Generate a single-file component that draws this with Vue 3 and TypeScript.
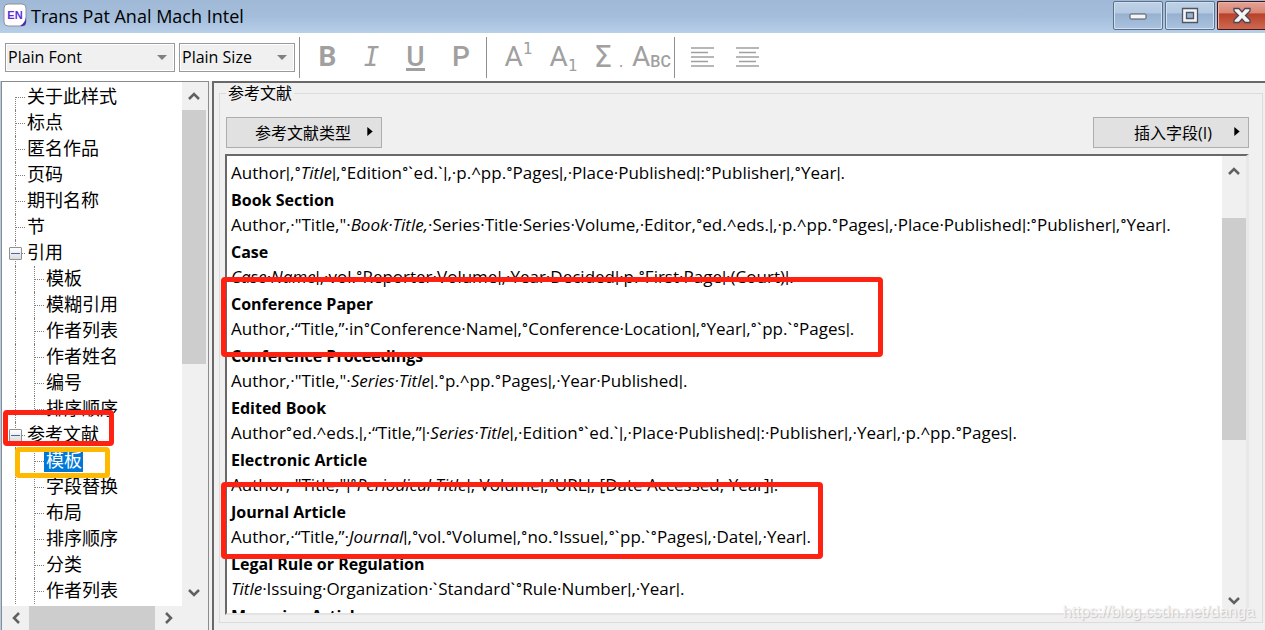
<script setup lang="ts">
import { ref } from 'vue'

interface TreeRow {
  label: string
  child?: boolean
  group?: boolean
  first?: boolean
  lastChild?: boolean
}

interface Run {
  text: string
  italic: boolean
  code: boolean
}

interface Line {
  heading?: string
  runs?: Run[]
}

const rows: TreeRow[] = [
  { label: '关于此样式', first: true },
  { label: '标点' },
  { label: '匿名作品' },
  { label: '页码' },
  { label: '期刊名称' },
  { label: '节' },
  { label: '引用', group: true },
  { label: '模板', child: true },
  { label: '模糊引用', child: true },
  { label: '作者列表', child: true },
  { label: '作者姓名', child: true },
  { label: '编号', child: true },
  { label: '排序顺序', child: true, lastChild: true },
  { label: '参考文献', group: true },
  { label: '模板', child: true },
  { label: '字段替换', child: true },
  { label: '布局', child: true },
  { label: '排序顺序', child: true },
  { label: '分类', child: true },
  { label: '作者列表', child: true },
]
const selected = ref(14)

// Italic stretches are wrapped in underscores; the separators | ` and ° get
// runs of their own so that they can be set in a narrower face.
function template(source: string): Line {
  const runs: Run[] = []
  source.split('_').forEach((part, i) => {
    for (const text of part.split(/([|`°]+)/)) {
      if (text) runs.push({ text, italic: i % 2 === 1, code: /^[|`°]/.test(text) })
    }
  })
  return { runs }
}

const lines: Line[] = [
  template('Author|,°_Title_|,°Edition°`ed.`|,·p.^pp.°Pages|,·Place·Published|:°Publisher|,°Year|.'),
  { heading: 'Book Section' },
  template('Author,·"Title,"·_Book·Title,_·Series·Title·Series·Volume,·Editor,°ed.^eds.|,·p.^pp.°Pages|,·Place·Published|:°Publisher|,°Year|.'),
  { heading: 'Case' },
  template('_Case·Name_|,·vol.°Reporter·Volume|,·Year·Decided|·p.°First·Page|·(Court)|.'),
  { heading: 'Conference Paper' },
  template('Author,·“Title,”·in°Conference·Name|,°Conference·Location|,°Year|,°`pp.`°Pages|.'),
  { heading: 'Conference Proceedings' },
  template('Author,·"Title,"·_Series·Title_|.°p.^pp.°Pages|,·Year·Published|.'),
  { heading: 'Edited Book' },
  template('Author°ed.^eds.|,·“Title,”|·_Series·Title_|,·Edition°`ed.`|,·Place·Published|:·Publisher|,·Year|,·p.^pp.°Pages|.'),
  { heading: 'Electronic Article' },
  template('Author,·"Title,"|°_Periodical·Title_|,·Volume|,°URL|,·[Date·Accessed,·Year]|.'),
  { heading: 'Journal Article' },
  template('Author,·“Title,”·_Journal_|,°vol.°Volume|,°no.°Issue|,°`pp.`°Pages|,·Date|,·Year|.'),
  { heading: 'Legal Rule or Regulation' },
  template('_Title_·Issuing·Organization·`Standard`°Rule·Number|,·Year|.'),
  { heading: 'Magazine Article' },
]

const treeThumb = { top: '0%', height: '54%' }
const editorThumb = { top: '8%', height: '55%' }
</script>

<template>
  <div class="window">
    <header class="titlebar">
      <svg class="logo" viewBox="0 0 24 24" aria-hidden="true">
        <rect x="1" y="1" width="22" height="22" rx="4" fill="#fff" stroke="#8f8f9c" />
        <path d="M23 14v5q0 4-4 4h-2q5-3 6-9z" fill="#4b2fa8" />
        <text x="12" y="16" text-anchor="middle" class="logo-text">EN</text>
      </svg>
      <h1>Trans Pat Anal Mach Intel</h1>
      <button class="cap" aria-label="Minimize">
        <svg viewBox="0 0 20 20"><rect x="2" y="8" width="16" height="5" rx="1" fill="#f4f4f4" stroke="#4d5566" /></svg>
      </button>
      <button class="cap" aria-label="Maximize">
        <svg viewBox="0 0 20 20">
          <path fill-rule="evenodd" d="M2.5 2.5h15v14h-15zM6.500 6.500v6h7v-6z" fill="#f4f4f4" stroke="#4d5566" stroke-width="1.300" />
        </svg>
      </button>
      <button class="cap close" aria-label="Close">
        <svg viewBox="0 0 20 20">
          <path d="M2 2.500h5l3 3.500 3-3.500h5v2.500l-4.500 4.500 4.500 4.500v2.500h-5l-3-3.500-3 3.500h-5v-2.500l4.500-4.500-4.500-4.500z" fill="#f4f4f4" stroke="#4d4553" stroke-width="1.300" />
        </svg>
      </button>
    </header>

    <div class="toolbar">
      <label class="combo font-combo">
        <select aria-label="Font"><option>Plain Font</option></select>
        <svg viewBox="0 0 10 6"><path d="M0 0h10l-5 5z" /></svg>
      </label>
      <label class="combo size-combo">
        <select aria-label="Size"><option>Plain Size</option></select>
        <svg viewBox="0 0 10 6"><path d="M0 0h10l-5 5z" /></svg>
      </label>
      <div class="tools">
        <button class="tool bold" aria-label="Bold">B</button>
        <button class="tool italic" aria-label="Italic">I</button>
        <button class="tool under" aria-label="Underline"><span>U</span></button>
        <button class="tool plain" aria-label="Plain">P</button>
      </div>
      <div class="tools">
        <button class="tool script" aria-label="Superscript">A<sup>1</sup></button>
        <button class="tool script" aria-label="Subscript">A<sub>1</sub></button>
        <button class="tool sigma" aria-label="Symbol">Σ<small>.</small></button>
        <button class="tool caps" aria-label="Small caps">A<small>BC</small></button>
      </div>
      <div class="tools">
        <button class="tool" aria-label="Align left">
          <svg viewBox="0 0 24 20"><path d="M0 1h23M0 5.500h17M0 10h23M0 14.500h17M0 19h23" /></svg>
        </button>
        <button class="tool" aria-label="Align center">
          <svg viewBox="0 0 24 20"><path d="M0 1h23M3 5.500h17M0 10h23M3 14.500h17M0 19h23" /></svg>
        </button>
      </div>
    </div>

    <main class="workspace">
      <nav class="sidebar">
        <ul class="tree">
          <li v-for="(row, i) in rows" :key="i" class="row">
            <span class="rail" :class="{ half: row.first, deep: row.child }">
              <button v-if="row.group" class="toggle" :aria-label="'折叠 ' + row.label"></button>
            </span>
            <span v-if="row.child" class="rail" :class="{ upper: row.lastChild }"></span>
            <span class="stub"></span>
            <button class="node" :class="{ selected: selected === i }" @click="selected = i">{{ row.label }}</button>
          </li>
        </ul>
        <div class="vbar">
          <button aria-label="Scroll up"><svg viewBox="0 0 12 8"><path d="M1 7l5-5 5 5" /></svg></button>
          <div class="track"><div class="thumb" :style="treeThumb"></div></div>
          <button aria-label="Scroll down"><svg viewBox="0 0 12 8"><path d="M1 1l5 5 5-5" /></svg></button>
        </div>
        <div class="hbar">
          <button aria-label="Scroll left"><svg viewBox="0 0 8 12"><path d="M7 1l-5 5 5 5" /></svg></button>
          <div class="hthumb"></div>
          <button aria-label="Scroll right"><svg viewBox="0 0 8 12"><path d="M1 1l5 5-5 5" /></svg></button>
        </div>
      </nav>

      <section class="pane">
        <fieldset>
          <legend>参考文献</legend>
          <div class="actions">
            <button class="push">参考文献类型<svg viewBox="0 0 6 10"><path d="M0 0l6 5-6 5z" /></svg></button>
            <button class="push insert">插入字段(I)<svg viewBox="0 0 6 10"><path d="M0 0l6 5-6 5z" /></svg></button>
          </div>
          <div class="editor">
            <div class="text">
              <template v-for="(line, i) in lines" :key="i">
                <h2 v-if="line.heading">{{ line.heading }}</h2>
                <p v-else><span v-for="(run, j) in line.runs" :key="j" :class="{ slanted: run.italic, code: run.code }">{{ run.text }}</span></p>
              </template>
            </div>
            <div class="vbar">
              <button aria-label="Scroll up"><svg viewBox="0 0 12 8"><path d="M1 7l5-5 5 5" /></svg></button>
              <div class="track"><div class="thumb" :style="editorThumb"></div></div>
              <button aria-label="Scroll down"><svg viewBox="0 0 12 8"><path d="M1 1l5 5 5-5" /></svg></button>
            </div>
          </div>
        </fieldset>
      </section>
    </main>

    <div class="mark mark-group"></div>
    <div class="mark mark-item"></div>
    <div class="mark mark-conference"></div>
    <div class="mark mark-journal"></div>
    <div class="watermark">https://blog.csdn.net/danga</div>
  </div>
</template>

<style>
body {
  margin: 0;
}
</style>

<style scoped>
* {
  box-sizing: border-box;
}
.window {
  position: relative;
  display: flex;
  flex-direction: column;
  height: 100vh;
  overflow: hidden;
  background: #fff;
  color: #000;
  font-family: "Open Sans", "Noto Sans CJK SC", sans-serif;
  font-size: 17px;
}
button {
  margin: 0;
  padding: 0;
  border: 0;
  background: none;
  color: inherit;
  font: inherit;
}
.titlebar {
  flex: none;
  display: flex;
  align-items: flex-start;
  gap: 2px;
  height: 33px;
  padding-left: 3px;
  background: linear-gradient(#9fb9d6, #a3bddb 50%, #b8cfe9);
}
.logo {
  width: 24px;
  height: 24px;
  margin-top: 3px;
}
.logo-text {
  font: bold 11px "Liberation Sans", sans-serif;
  fill: #5a2de0;
}
h1 {
  flex: 1;
  margin: 0 0 0 2px;
  font-size: 18px;
  font-weight: 400;
  line-height: 32px;
}
.cap {
  display: flex;
  align-items: center;
  justify-content: center;
  width: 50px;
  height: 29px;
  margin-top: 1px;
  border: 1px solid #5b6f88;
  border-radius: 2px;
  box-shadow: inset 0 0 0 1px #d3e0ef;
  background: linear-gradient(#bdd0e5 0, #b4cae2 42%, #97b0cf 43%, #a9c3e0 100%);
}
.cap svg {
  width: 20px;
  height: 20px;
}
.close {
  width: 48px;
  border-color: #43151b;
  border-right: 0;
  border-radius: 2px 0 0 2px;
  box-shadow: inset 1px 1px 0 #edb5a8;
  background: linear-gradient(#e3a193 0, #d98675 42%, #b8402a 43%, #cd6a50 100%);
}
.toolbar {
  flex: none;
  display: flex;
  align-items: center;
  height: 48px;
  padding-left: 5px;
  background: #fff;
}
.combo {
  position: relative;
  height: 29px;
  margin-right: 4px;
}
.font-combo {
  width: 170px;
}
.size-combo {
  width: 116px;
}
.combo select {
  width: 100%;
  height: 100%;
  padding: 0 0 0 2px;
  border: 1px solid #999;
  border-radius: 0;
  box-shadow: inset 0 0 0 1px #fff;
  appearance: none;
  background: #f0f0f0;
  color: #000;
  font: 16px/26px "Open Sans", sans-serif;
}
.combo svg {
  position: absolute;
  top: 12px;
  right: 8px;
  width: 10px;
  height: 6px;
  fill: #808080;
  pointer-events: none;
}
.tools {
  display: flex;
  height: 41px;
  margin-right: 2px;
  padding: 0 0 0 5px;
  border-left: 1px solid #8f8f8f;
}
.tools + .tools {
  padding-left: 9px;
}
.tools + .tools + .tools {
  padding-left: 5px;
}
.tool {
  display: flex;
  align-items: center;
  justify-content: center;
  width: 45px;
  color: #a0a0a0;
  font: 28px/40px Roboto, sans-serif;
}
.tool svg {
  width: 24px;
  height: 20px;
  fill: none;
  stroke: #a0a0a0;
  stroke-width: 1.400;
}
.bold {
  font-weight: 700;
}
.plain,
.under {
  font-weight: 500;
}
.italic {
  width: 43px;
  font-family: "DejaVu Sans Mono", monospace;
  font-style: italic;
  font-size: 26px;
}
.under span {
  height: 28px;
  border-bottom: 3px solid #a0a0a0;
  line-height: 28px;
}
.plain {
  width: 46px;
}
.script sup,
.script sub {
  align-self: flex-start;
  font: 16px/24px "DejaVu Sans Mono", monospace;
}
.script sub {
  align-self: flex-end;
}
.sigma {
  gap: 6px;
  font-family: "DejaVu Sans", sans-serif;
  font-size: 30px;
}
.sigma small,
.caps small {
  align-self: flex-end;
  font-size: 16px;
  line-height: 32px;
}
.caps small {
  font-weight: 500;
}
.caps {
  width: 41px;
}
.workspace {
  flex: 1;
  display: flex;
  gap: 3px;
  min-height: 0;
  border-left: 1px solid #b3cbe9;
  background: #f0f0f0;
}
.sidebar {
  flex: none;
  display: grid;
  grid-template-columns: 1fr 24px;
  grid-template-rows: minmax(0, 1fr) 24px;
  width: 208px;
  padding-right: 2px;
  border: solid #8c8c8c;
  border-width: 1px 1px 0 1px;
  background: #f0f0f0;
}
.tree {
  min-height: 0;
  margin: 0;
  padding: 2px 0 0 13px;
  overflow: hidden;
  background: #fff;
  list-style: none;
}
.row {
  display: flex;
  align-items: center;
  height: 26px;
}
.rail {
  position: relative;
  width: 1px;
  height: 26px;
  border-left: 1px dotted #808080;
}
.deep {
  width: 19px;
}
.half {
  height: 13px;
  align-self: flex-end;
}
.upper {
  height: 13px;
  align-self: flex-start;
}
.stub {
  width: 9px;
  border-top: 1px dotted #808080;
}
.toggle {
  position: absolute;
  top: 7px;
  left: -7px;
  width: 13px;
  height: 13px;
  border: 1px solid #919191;
  border-radius: 1px;
  background: linear-gradient(#4b63a7, #4b63a7) center / 9px 1px no-repeat, linear-gradient(#fff, #dcdcdc);
}
.node {
  height: 22px;
  padding: 0 1px 2px 2px;
  font-size: 18px;
  line-height: 20px;
  white-space: nowrap;
}
.selected {
  background: #0078d7;
  color: #fff;
}
.vbar {
  display: flex;
  flex-direction: column;
  width: 24px;
  background: #f0f0f0;
}
.vbar button {
  height: 28px;
}
.vbar button:last-child {
  height: 26px;
}
.vbar svg,
.hbar svg {
  display: block;
  width: 12px;
  height: 8px;
  margin: auto;
  fill: none;
  stroke: #606060;
  stroke-width: 2.500;
}
.hbar svg {
  width: 8px;
  height: 12px;
}
.track {
  position: relative;
  flex: 1;
}
.thumb {
  position: absolute;
  width: 100%;
  background: #cdcdcd;
}
.hbar {
  display: flex;
}
.hbar button {
  width: 27px;
}
.hthumb {
  flex: 1;
  background: #cdcdcd;
}
.pane {
  flex: 1;
  min-width: 0;
  padding: 0 2px 7px 5px;
  border: solid #696969;
  border-width: 2px 0 0 2px;
}
fieldset {
  display: flex;
  flex-direction: column;
  height: 100%;
  min-width: 0;
  margin: 0;
  padding: 14px 13px 7px 5px;
  border: 1px solid #dcdcdc;
}
legend {
  margin-left: 1px;
  padding: 0 2px;
  font-size: 16px;
  line-height: 20px;
}
.actions {
  flex: none;
  display: flex;
  justify-content: space-between;
  margin: 0 0 6px 1px;
}
.push {
  display: flex;
  align-items: center;
  justify-content: flex-end;
  gap: 16px;
  width: 156px;
  height: 31px;
  padding: 0 8px 2px 0;
  border: 1px solid #adadad;
  background: #e1e1e1;
  font-size: 16px;
}
.insert {
  gap: 22px;
}
.push svg {
  width: 6px;
  height: 9px;
}
.editor {
  flex: 1;
  display: flex;
  min-height: 0;
  border: 2px solid #696969;
  border-right: 3px solid #e8e8e8;
  border-bottom: 2px solid #e3e3e3;
  background: #fff;
}
.text {
  flex: 1;
  min-width: 0;
  padding: 4px 0 0 4px;
  overflow: hidden;
  white-space: nowrap;
}
.text p,
.text h2 {
  margin: 0;
  height: 26px;
  font-size: 17px;
  font-weight: 400;
  line-height: 26px;
}
.text h2 {
  padding-top: 2px;
  font-size: 16px;
  font-weight: 700;
  line-height: 24px;
}
.slanted {
  font-style: italic;
}
.code {
  font-family: Roboto, sans-serif;
  font-style: normal;
}
.editor .vbar button {
  height: 30px;
}
.editor .vbar button:last-child {
  height: 24px;
}
.mark {
  position: absolute;
  border: 5px solid #ff2112;
  border-radius: 4px;
  pointer-events: none;
}
.mark-group {
  left: 3px;
  top: 410px;
  width: 111px;
  height: 36px;
}
.mark-item {
  left: 15px;
  top: 447px;
  width: 95px;
  height: 31px;
  border-color: #ffb900;
}
.mark-conference {
  left: 221px;
  top: 277px;
  width: 662px;
  height: 80px;
}
.mark-journal {
  left: 221px;
  top: 482px;
  width: 602px;
  height: 77px;
}
.watermark {
  position: absolute;
  right: 10px;
  bottom: 8px;
  color: #f4f4f4;
  font: 16px/20px "Liberation Sans", sans-serif;
  text-shadow: 1px 1px 1px #c4c4c4;
}
</style>
